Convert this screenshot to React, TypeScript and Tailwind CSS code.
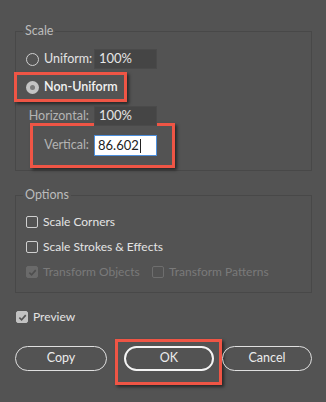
const font = { fontFamily: "Lato, 'Open Sans', sans-serif" };

function Radio({ checked }: { checked?: boolean }) {
  if (checked) {
    return (
      <span className="flex h-[13px] w-[13px] shrink-0 items-center justify-center rounded-full bg-[#c4c4c4]">
        <span className="h-[5px] w-[5px] rounded-full bg-[#7c7c7c]" />
      </span>
    );
  }
  return <span className="h-[13px] w-[13px] shrink-0 rounded-full border-[1.5px] border-[#cfcfcf]" />;
}

function Check({ checked, disabled, filled }: { checked?: boolean; disabled?: boolean; filled?: boolean }) {
  const box = filled
    ? "bg-[#c2c2c2] border-[#c2c2c2]"
    : disabled
      ? checked
        ? "bg-[#6a6a6a] border-[#6a6a6a]"
        : "border-[#6e6e6e]"
      : "border-[#cfcfcf]";
  return (
    <span className={`flex h-[12px] w-[12px] shrink-0 items-center justify-center rounded-[2px] border ${box}`}>
      {checked && (
        <svg width="9" height="9" viewBox="0 0 10 10">
          <path
            d="M1.5 5.2 L4 7.6 L8.6 2.4"
            fill="none"
            stroke={filled ? "#555555" : "#4e4e4e"}
            strokeWidth="1.8"
          />
        </svg>
      )}
    </span>
  );
}

function Field({ value, active }: { value: string; active?: boolean }) {
  return (
    <div
      className={
        active
          ? "flex h-[21px] w-[63px] items-center border border-[#4d8fdc] bg-white pl-[3px] text-[13px] text-[#222]"
          : "flex h-[20px] w-[63px] items-center border border-[#4a4a4a] bg-[#454545] pl-[4px] text-[13px] text-[#e6e6e6]"
      }
    >
      {value}
      {active && <span className="ml-[1px] h-[14px] w-px bg-[#222]" />}
    </div>
  );
}

function Group({ label, className, children }: { label: string; className: string; children: React.ReactNode }) {
  return (
    <div className={`relative border border-[#484848] ${className}`}>
      <span className="absolute -top-[9px] left-[7px] bg-[#535353] px-[2px] text-[12.5px] leading-[16px] text-[#bcbcbc]">
        {label}
      </span>
      {children}
    </div>
  );
}

export default function App() {
  return (
    <div
      className="flex h-[402px] w-[326px] flex-col overflow-hidden bg-[#535353] pl-[15px] pt-[31px] text-[12px]"
      style={font}
    >
      <Group label="Scale" className="w-[297px] pb-[2px] pt-[17px]">
        <div className="flex h-[20px] items-center pl-[10px]">
          <div className="flex w-[68px] items-center gap-[5px] text-[12.5px] text-[#e4e4e4]">
            <Radio />
            <span>Uniform:</span>
          </div>
          <Field value="100%" />
        </div>

        <div className="-ml-[2px] mt-[3px] flex h-[30px] w-[113px] items-center border-[3px] border-[#ef5545] pl-[9px] shadow-[2px_2px_3px_rgba(0,0,0,0.55)]">
          <div className="flex items-center gap-[5px] text-[12.5px] font-semibold text-[#f2f2f2]">
            <Radio checked />
            <span>Non-Uniform</span>
          </div>
        </div>

        <div className="mt-[4px] flex h-[20px] items-center">
          <span className="w-[78px] pr-[5px] text-right text-[12.5px] text-[#b4b4b4]">Horizontal:</span>
          <Field value="100%" />
        </div>

        <div className="-mt-[3px] ml-[14px] flex h-[45px] w-[145px] items-center border-[3px] border-[#ef5545] shadow-[2px_2px_3px_rgba(0,0,0,0.55)]">
          <span className="w-[61px] pr-[5px] text-right text-[12.5px] text-[#b4b4b4]">Vertical:</span>
          <Field value="86.602" active />
        </div>
      </Group>

      <Group label="Options" className="mt-[24px] w-[297px] pb-[10px] pt-[16px]">
        <div className="flex flex-col gap-[5px] pl-[10px]">
          <div className="flex h-[20px] items-center gap-[5px] text-[#e4e4e4]">
            <Check />
            <span>Scale Corners</span>
          </div>
          <div className="flex h-[20px] items-center gap-[5px] text-[#e4e4e4]">
            <Check />
            <span>Scale Strokes &amp; Effects</span>
          </div>
          <div className="flex h-[20px] items-center text-[#7a7a7a]">
            <div className="flex w-[126px] items-center gap-[5px]">
              <Check checked disabled />
              <span>Transform Objects</span>
            </div>
            <div className="flex items-center gap-[5px]">
              <Check disabled />
              <span>Transform Patterns</span>
            </div>
          </div>
        </div>
      </Group>

      <div className="ml-[1px] mt-[14px] flex h-[20px] items-center gap-[5px] text-[#e4e4e4]">
        <Check checked filled />
        <span>Preview</span>
      </div>

      <div className="mt-[19px] flex items-start text-[12.5px] text-[#ececec]">
        <button className="h-[25px] w-[92px] rounded-full border-[1.5px] border-[#e0e0e0]">Copy</button>
        <div className="-mt-[7px] ml-[8px] h-[46px] w-[107px] border-[3px] border-[#ef5545] pl-[6px] pt-[4px] shadow-[2px_2px_3px_rgba(0,0,0,0.55)]">
          <button className="h-[25px] w-[90px] rounded-full border-2 border-[#f4f4f4]">OK</button>
        </div>
        <button className="h-[25px] w-[90px] rounded-full border-[1.5px] border-[#e0e0e0]">Cancel</button>
      </div>
    </div>
  );
}
